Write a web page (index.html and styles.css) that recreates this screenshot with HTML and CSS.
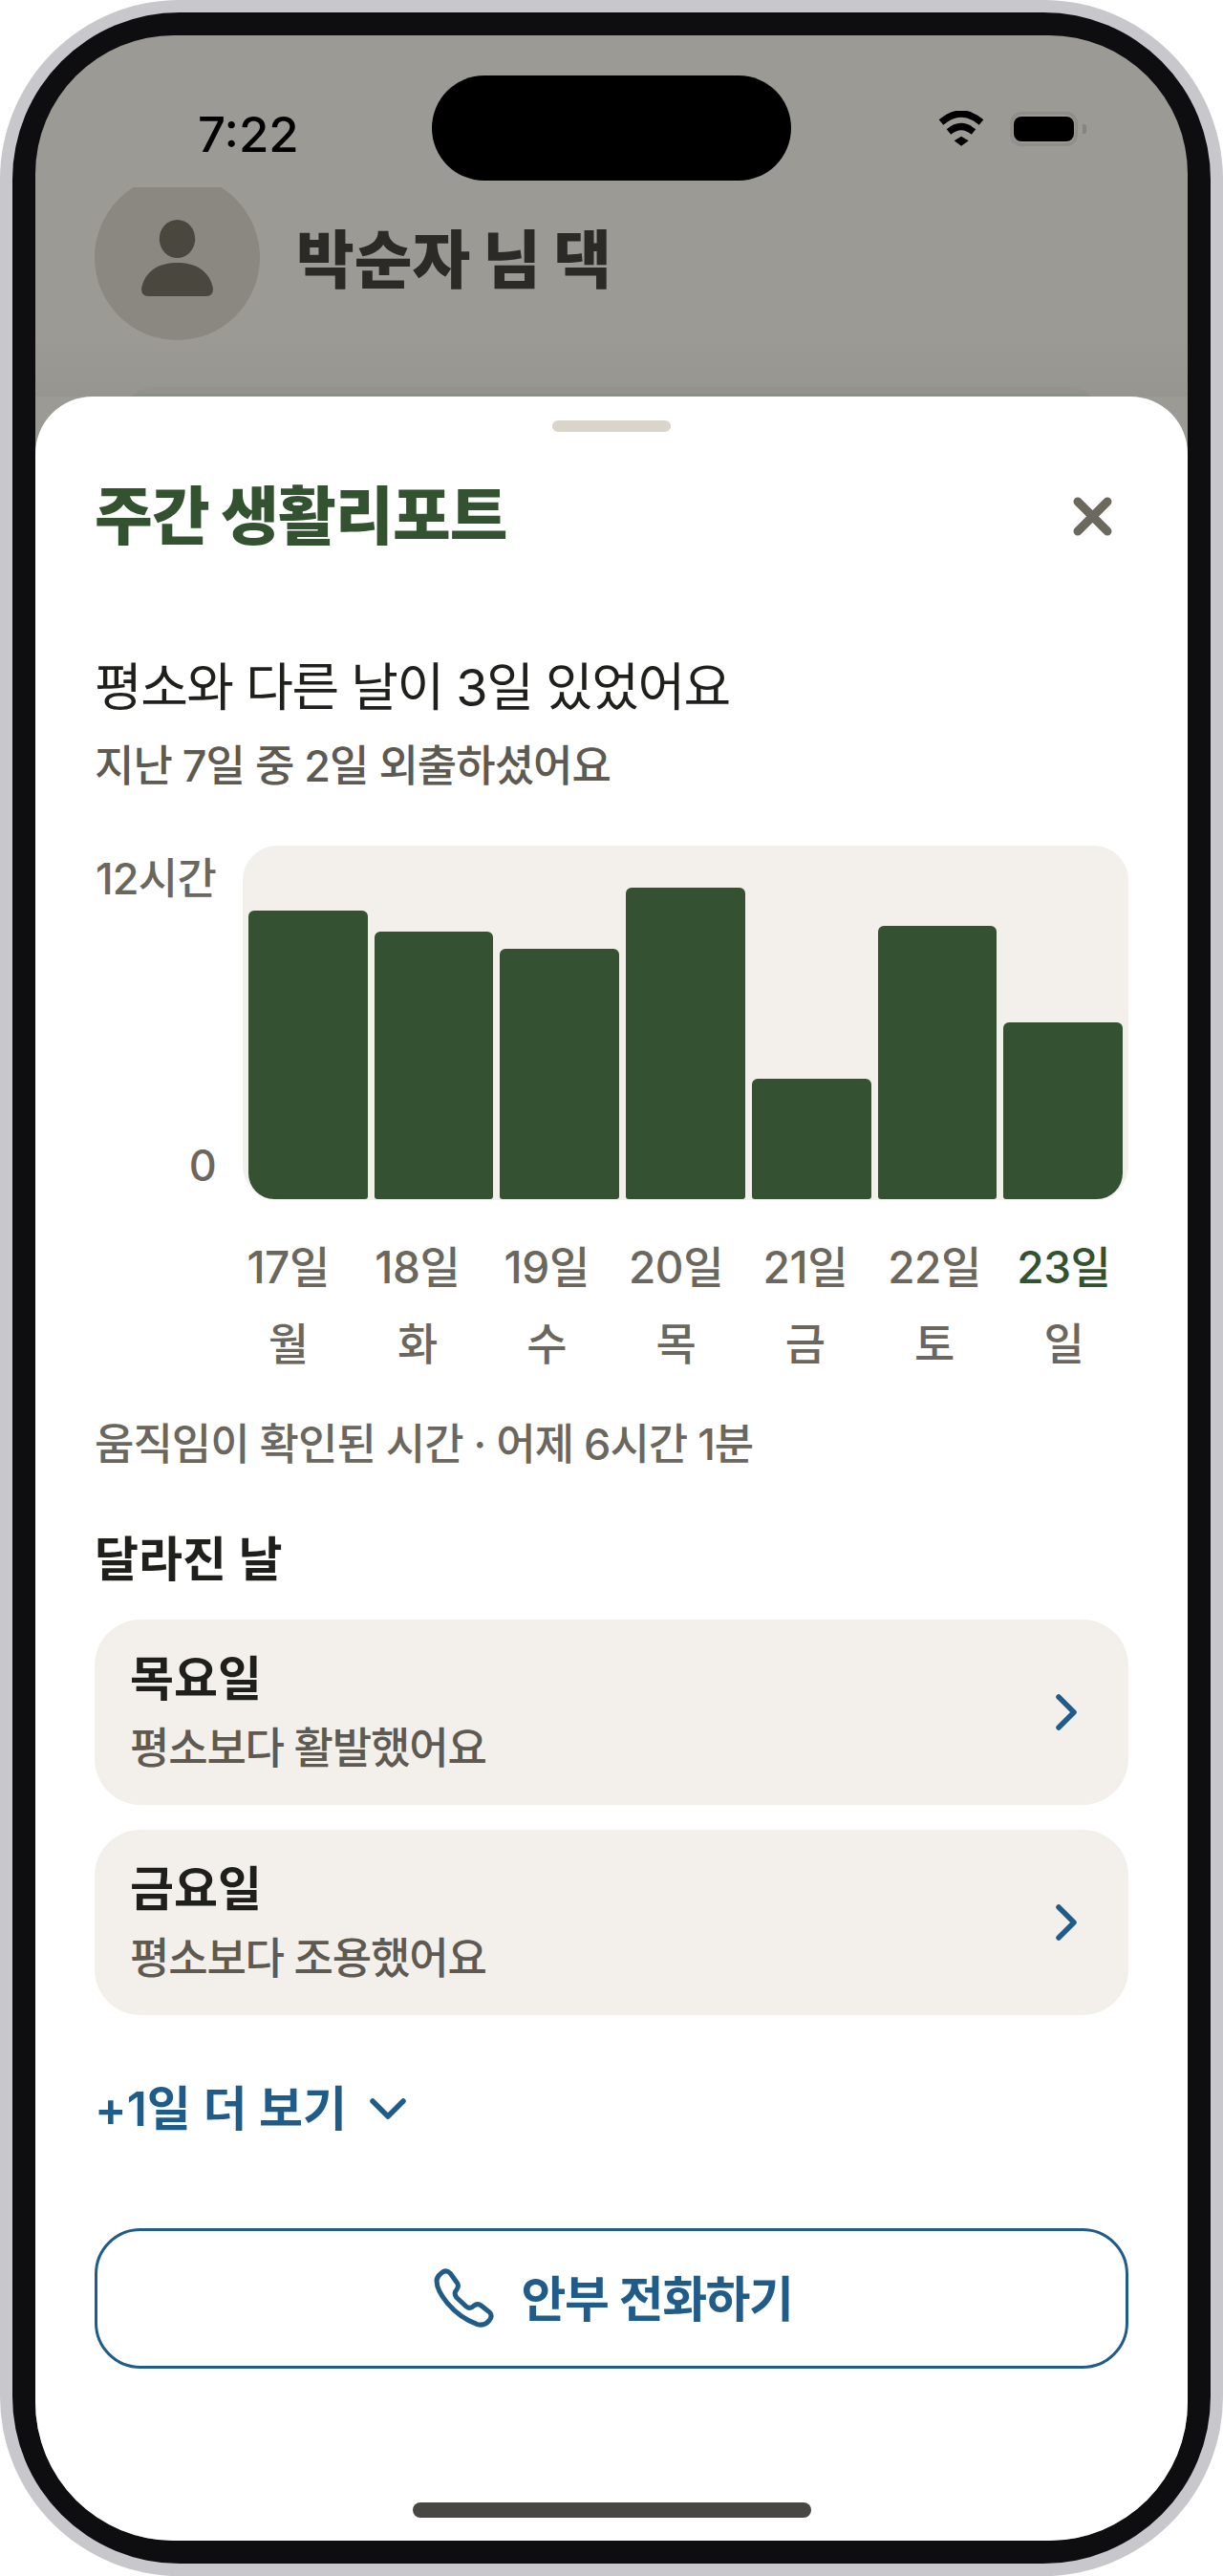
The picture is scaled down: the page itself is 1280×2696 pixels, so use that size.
FILE: index.html
```html
<!DOCTYPE html>
<html lang="ko">
<head>
    <meta charset="UTF-8">
    <meta name="viewport" content="width=device-width, initial-scale=1.0">
    <title>주간 생활리포트</title>
    <link rel="stylesheet" href="styles.css">
</head>
<body>
    <div class="phone">
        <div class="bezel">
            <div class="screen">
                <div class="status-bar">
                    <span class="clock">7:22</span>
                    <div class="island"></div>
                    <div class="status-icons">
                        <svg class="wifi" viewBox="0 0 50 37" width="50" height="37">
                            <path d="M3 12 Q24 -6 45 12" fill="none" stroke="#000" stroke-width="7"/>
                            <path d="M11 22 Q24 11 37 22" fill="none" stroke="#000" stroke-width="7"/>
                            <path d="M16.7 31.3 L24 26.7 L31.7 31.3 L24 36.7 Z" fill="#000"/>
                        </svg>
                        <div class="battery"><div class="battery-fill"></div></div>
                        <div class="battery-nub"></div>
                    </div>
                </div>

                <div class="home-behind">
                    <div class="home-header">
                        <div class="avatar">
                            <svg viewBox="0 0 75 80" width="75" height="80">
                                <ellipse cx="37.5" cy="20" rx="18.7" ry="20" fill="#4a473f"/>
                                <path d="M0 72 C4 52 20 45 37.5 45 C55 45 71 52 75 72 Q75 80 68 80 L7 80 Q0 80 0 72 Z" fill="#4a473f"/>
                            </svg>
                        </div>
                        <h2 class="home-name">박순자 님 댁</h2>
                    </div>
                    <div class="home-card"></div>
                </div>

                <div class="sheet">
                    <div class="handle"></div>
                    <div class="sheet-head">
                        <h1>주간 생활리포트</h1>
                        <svg class="close" viewBox="0 0 41 41" width="41" height="41">
                            <path d="M5 5 L36 36 M36 5 L5 36" fill="none" stroke="#6b685e" stroke-width="9" stroke-linecap="round"/>
                        </svg>
                    </div>

                    <p class="headline">평소와 다른 날이 3일 있었어요</p>
                    <p class="subline">지난 7일 중 2일 외출하셨어요</p>

                    <div class="chart-row">
                        <div class="y-axis">
                            <span>12시간</span>
                            <span>0</span>
                        </div>
                        <div class="chart">
                            <div class="bar" style="height: 302px"></div>
                            <div class="bar" style="height: 280px"></div>
                            <div class="bar" style="height: 262px"></div>
                            <div class="bar" style="height: 326px"></div>
                            <div class="bar" style="height: 126px"></div>
                            <div class="bar" style="height: 286px"></div>
                            <div class="bar" style="height: 185px"></div>
                        </div>
                    </div>

                    <div class="day-grid dates">
                        <span>17일</span>
                        <span>18일</span>
                        <span>19일</span>
                        <span>20일</span>
                        <span>21일</span>
                        <span>22일</span>
                        <span class="today">23일</span>
                    </div>
                    <div class="day-grid weekdays">
                        <span>월</span>
                        <span>화</span>
                        <span>수</span>
                        <span>목</span>
                        <span>금</span>
                        <span>토</span>
                        <span>일</span>
                    </div>

                    <p class="note">움직임이 확인된 시간 · 어제 6시간 1분</p>

                    <h3 class="section-title">달라진 날</h3>
                    <div class="day-list">
                        <div class="day-card">
                            <div>
                                <div class="day-name">목요일</div>
                                <div class="day-desc">평소보다 활발했어요</div>
                            </div>
                            <svg class="chevron" viewBox="0 0 24 40" width="24" height="40">
                                <path d="M4 4 L20 20 L4 36" fill="none" stroke="#1f5c8a" stroke-width="5.5" stroke-linecap="round" stroke-linejoin="round"/>
                            </svg>
                        </div>
                        <div class="day-card">
                            <div>
                                <div class="day-name">금요일</div>
                                <div class="day-desc">평소보다 조용했어요</div>
                            </div>
                            <svg class="chevron" viewBox="0 0 24 40" width="24" height="40">
                                <path d="M4 4 L20 20 L4 36" fill="none" stroke="#1f5c8a" stroke-width="5.5" stroke-linecap="round" stroke-linejoin="round"/>
                            </svg>
                        </div>
                    </div>

                    <div class="more">
                        <span>+1일 더 보기</span>
                        <svg viewBox="0 0 38 22" width="38" height="22">
                            <path d="M3 3 L19 19 L35 3" fill="none" stroke="#1f5c8a" stroke-width="5.5" stroke-linecap="round" stroke-linejoin="round"/>
                        </svg>
                    </div>

                    <button class="call-btn">
                        <svg viewBox="60 165 200 200" width="67" height="67">
                            <path d="M90 188 Q105 172 120 186 L143 218 Q148 228 140 238 Q130 248 140 262 L170 290 Q182 300 194 288 Q206 278 218 288 L243 308 Q254 320 242 334 Q228 352 205 346 Q150 325 112 280 Q78 240 78 210 Q78 198 90 188 Z" fill="none" stroke="#1f5c8a" stroke-width="15" stroke-linejoin="round"/>
                        </svg>
                        <span class="call-label">안부 전화하기</span>
                    </button>

                    <div class="home-bar"></div>
                </div>
            </div>
        </div>
    </div>
</body>
</html>
```

FILE: styles.css
```css
* {
    box-sizing: border-box;
}
body {
    margin: 0;
    background: white;
    font-family: Inter, "Noto Sans CJK KR", sans-serif;
}
h1, h2, h3, p {
    margin: 0;
}
.phone {
    width: 1280px;
    height: 2696px;
    padding: 13px;
    background: #c8c8cc;
    border-radius: 188px;
}
.bezel {
    height: 100%;
    padding: 24px;
    background: #0e0e10;
    border-radius: 175px;
}
.screen {
    position: relative;
    height: 100%;
    background: #9b9a95;
    border-radius: 145px;
    overflow: hidden;
}

/* status bar */
.status-bar {
    position: relative;
    height: 159px;
}
.clock {
    position: absolute;
    left: 170px;
    top: 74px;
    font-size: 51px;
    line-height: 60px;
    font-weight: 500;
    color: black;
}
.island {
    position: absolute;
    left: 415px;
    top: 42px;
    width: 376px;
    height: 110px;
    background: black;
    border-radius: 55px;
}
.status-icons {
    position: absolute;
    left: 945px;
    top: 79px;
    display: flex;
    align-items: center;
}
.battery {
    width: 71px;
    height: 36px;
    margin-left: 25px;
    padding: 2px 1px;
    border: 3px solid #8f8e89;
    border-radius: 12px;
}
.battery-fill {
    height: 100%;
    background: black;
    border-radius: 8px;
}
.battery-nub {
    width: 4px;
    height: 10px;
    margin-left: 5px;
    background: #85847f;
    border-radius: 0 3px 3px 0;
}

/* page behind the sheet */
.home-behind {
    overflow: hidden;
    height: 219px;
    background: linear-gradient(#9b9a95 70%, #969590);
}
.home-header {
    display: flex;
    align-items: center;
    gap: 38px;
    margin: -13px 0 0 62px;
}
.avatar {
    display: flex;
    align-items: center;
    justify-content: center;
    width: 173px;
    height: 173px;
    background: #8a8880;
    border-radius: 50%;
}
.home-name {
    padding-top: 5px;
    font-size: 66px;
    font-weight: 900;
    line-height: 80px;
    color: #2b2a26;
}
.home-card {
    height: 40px;
    margin: 49px 93px 0;
    background: linear-gradient(#94928d 7px, #8c908a 7px);
    border-radius: 30px 30px 0 0;
}

/* bottom sheet */
.sheet {
    position: absolute;
    left: 0;
    right: 0;
    top: 378px;
    bottom: 0;
    display: flex;
    flex-direction: column;
    padding: 25px 62px 0;
    background: white;
    border-radius: 60px 60px 0 0;
}
.handle {
    align-self: center;
    width: 124px;
    height: 12px;
    background: #d9d5ca;
    border-radius: 6px;
}
.sheet-head {
    display: flex;
    justify-content: space-between;
    align-items: center;
    margin-top: 48px;
    padding-right: 17px;
}
.sheet-head h1 {
    font-size: 66px;
    font-weight: 900;
    line-height: 80px;
    letter-spacing: -0.8px;
    color: #33522f;
}
.headline {
    margin-top: 110px;
    font-size: 54px;
    line-height: 60px;
    letter-spacing: -1.5px;
    color: #1f1f1c;
}
.subline {
    margin-top: 25px;
    font-size: 45px;
    line-height: 54px;
    font-weight: 500;
    letter-spacing: -1px;
    color: #5e5a52;
}
.chart-row {
    display: flex;
    gap: 28px;
    margin-top: 56px;
}
.y-axis {
    display: flex;
    flex-direction: column;
    justify-content: space-between;
    align-items: flex-end;
    width: 127px;
    padding: 8px 0 9px;
    font-size: 45px;
    line-height: 54px;
    font-weight: 500;
    letter-spacing: -0.8px;
    white-space: nowrap;
    color: #6b675e;
}
.chart {
    flex: 1;
    display: flex;
    align-items: flex-end;
    gap: 7px;
    height: 371px;
    padding: 0 6px 1px;
    background: #f3f0eb;
    border-radius: 36px;
}
.bar {
    flex: 1;
    background: #345232;
    border-radius: 6px 6px 3px 3px;
}
.bar:first-child {
    border-bottom-left-radius: 27px;
}
.bar:last-child {
    border-bottom-right-radius: 27px;
}
.day-grid {
    display: grid;
    grid-template-columns: repeat(7, 1fr);
    margin-left: 135px;
    font-size: 46px;
    line-height: 54px;
    font-weight: 500;
    letter-spacing: -0.4px;
    text-align: center;
    color: #6b675e;
}
.dates {
    margin-top: 43px;
}
.weekdays {
    margin-top: 26px;
}
.today {
    color: #33522f;
}
.note {
    margin-top: 52px;
    font-size: 45px;
    line-height: 54px;
    font-weight: 500;
    letter-spacing: -1px;
    color: #6b675e;
}
.section-title {
    margin-top: 63px;
    font-size: 50px;
    line-height: 60px;
    font-weight: 600;
    color: #1f1f1c;
}
.day-list {
    display: flex;
    flex-direction: column;
    gap: 26px;
    margin-top: 33px;
}
.day-card {
    display: flex;
    justify-content: space-between;
    align-items: center;
    height: 194px;
    padding: 0 53px 0 37px;
    background: #f3f0eb;
    border-radius: 48px;
}
.day-name {
    font-size: 50px;
    line-height: 60px;
    font-weight: 600;
    color: #1f1f1c;
}
.day-desc {
    margin-top: 16px;
    font-size: 45px;
    line-height: 54px;
    font-weight: 500;
    letter-spacing: -1.2px;
    color: #5e5a52;
}
.more {
    display: flex;
    align-items: center;
    gap: 24px;
    margin-top: 68px;
    font-size: 50px;
    line-height: 60px;
    font-weight: 600;
    color: #1f5c8a;
}
.call-btn {
    display: flex;
    justify-content: center;
    align-items: center;
    gap: 28px;
    width: 100%;
    height: 147px;
    margin-top: 95px;
    padding: 0;
    background: white;
    border: 3px solid #1f5c8a;
    border-radius: 48px;
    font-family: inherit;
    font-size: 51px;
    font-weight: 600;
    letter-spacing: -1.5px;
    color: #1f5c8a;
}
.call-label {
    padding-bottom: 6px;
}
.home-bar {
    position: absolute;
    left: 395px;
    bottom: 24px;
    width: 417px;
    height: 16px;
    background: #484744;
    border-radius: 8px;
}
```
